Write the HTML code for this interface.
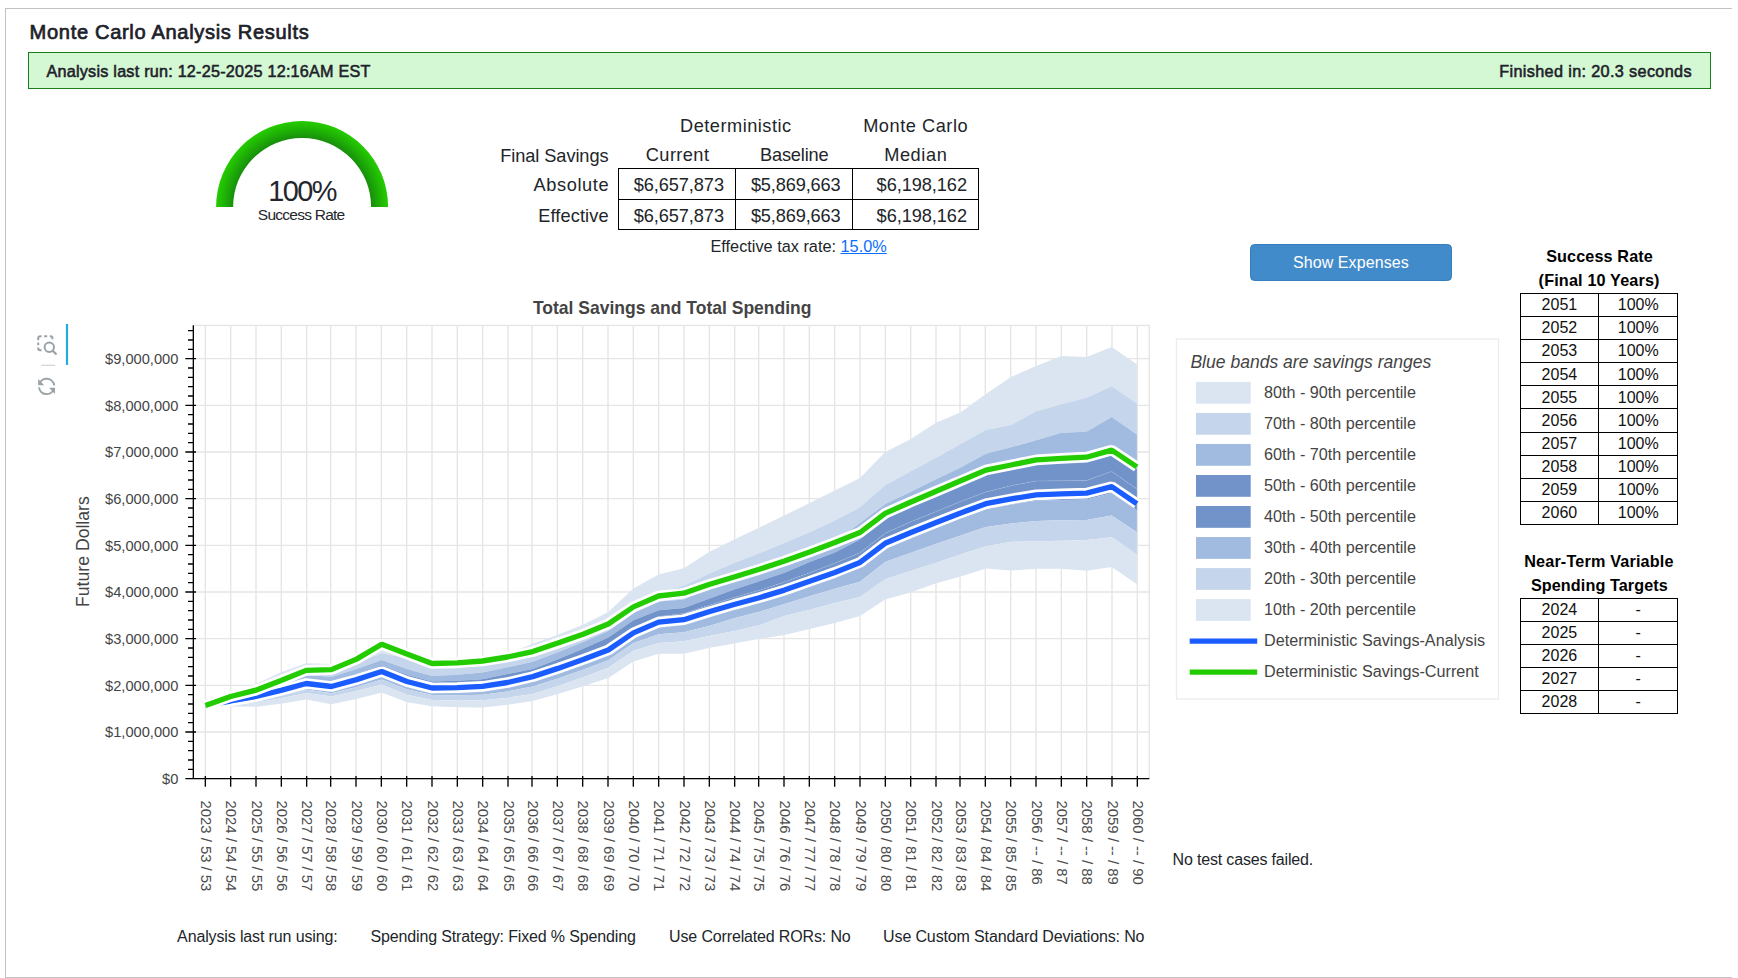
<!DOCTYPE html>
<html lang="en"><head><meta charset="utf-8"><title>Monte Carlo Analysis Results</title>
<style>
html,body{margin:0;padding:0;background:#fff;}
body{width:1738px;height:978px;position:relative;overflow:hidden;font-family:"Liberation Sans",Arial,Helvetica,sans-serif;color:#212529;}
.t{position:absolute;white-space:nowrap;margin:0;padding:0;font-weight:normal;}
.frame{position:absolute;left:5px;top:8px;width:1727px;height:970px;box-sizing:border-box;border:1px solid #c2c2c2;border-right:none;}
.banner{position:absolute;left:28px;top:52px;width:1683px;height:37px;box-sizing:border-box;border:1px solid #1b7d1b;background:#d4f7d4;}
svg.chart{position:absolute;left:0;top:0;}
svg.gauge{position:absolute;}
.box{position:absolute;box-sizing:border-box;border:1.33px solid #000;}
.ln{position:absolute;background:#000;}
.btn{position:absolute;left:1250px;top:244px;width:202px;height:37px;box-sizing:border-box;border:1px solid #357ebd;border-radius:4.5px;background:#428bca;}
a{color:#0d6efd;text-decoration:underline;}
</style></head><body>
<div class="frame"></div>
<h1 class="t" style="left:29.60px;top:19.68px;font-size:20.1px;line-height:24.12px;letter-spacing:0.659px;color:#1d2129;-webkit-text-stroke:0.7px #1d2129;">Monte Carlo Analysis Results</h1>
<div class="banner"></div>
<div class="t" style="left:46.50px;top:61.87px;font-size:16.2px;line-height:19.44px;letter-spacing:0.226px;color:#1d2129;-webkit-text-stroke:0.55px #1d2129;">Analysis last run: 12-25-2025 12:16AM EST</div>
<div class="t" style="left:1499.20px;top:61.87px;font-size:16.2px;line-height:19.44px;letter-spacing:0.366px;color:#1d2129;-webkit-text-stroke:0.55px #1d2129;">Finished in: 20.3 seconds</div>
<svg class="gauge" width="200" height="100" viewBox="202 115 200 100" style="left:202px;top:115px"><defs><radialGradient id="gg" gradientUnits="userSpaceOnUse" cx="302.1" cy="207.0" r="86.0"><stop offset="0" stop-color="#178f0c"/><stop offset="0.802" stop-color="#178f0c"/><stop offset="0.911" stop-color="#1fb305"/><stop offset="1" stop-color="#25cc00"/></radialGradient></defs><path d="M216.10 207.00A86.0 86.0 0 0 1 388.10 207.00L371.10 207.00A69.0 69.0 0 0 0 233.10 207.00Z" fill="url(#gg)"/></svg>
<div class="t" style="left:268.20px;top:173.75px;font-size:28.9px;line-height:34.68px;letter-spacing:-1.575px;color:#23272b;">100%</div>
<div class="t" style="left:257.80px;top:205.73px;font-size:15.5px;line-height:18.60px;letter-spacing:-0.747px;color:#23272b;">Success Rate</div>
<section class="summary">
<div class="t" style="left:680.00px;top:116.07px;font-size:18.2px;line-height:21.84px;letter-spacing:0.502px;color:#212529;">Deterministic</div>
<div class="t" style="left:863.20px;top:116.07px;font-size:18.2px;line-height:21.84px;letter-spacing:0.536px;color:#212529;">Monte Carlo</div>
<div class="t" style="left:500.30px;top:145.67px;font-size:18.2px;line-height:21.84px;letter-spacing:-0.080px;color:#212529;">Final Savings</div>
<div class="t" style="left:645.80px;top:145.17px;font-size:18.2px;line-height:21.84px;letter-spacing:0.417px;color:#212529;">Current</div>
<div class="t" style="left:760.00px;top:145.17px;font-size:18.2px;line-height:21.84px;letter-spacing:-0.174px;color:#212529;">Baseline</div>
<div class="t" style="left:884.20px;top:145.17px;font-size:18.2px;line-height:21.84px;letter-spacing:0.581px;color:#212529;">Median</div>
<div class="t" style="left:533.60px;top:174.97px;font-size:18.2px;line-height:21.84px;letter-spacing:0.595px;color:#212529;">Absolute</div>
<div class="t" style="left:538.20px;top:205.57px;font-size:18.2px;line-height:21.84px;letter-spacing:0.116px;color:#212529;">Effective</div>
<div class="ln" style="left:618px;top:168px;width:1px;height:62px"></div>
<div class="ln" style="left:735px;top:168px;width:1px;height:62px"></div>
<div class="ln" style="left:852px;top:168px;width:1px;height:62px"></div>
<div class="ln" style="left:978px;top:168px;width:1px;height:62px"></div>
<div class="ln" style="left:618px;top:168px;width:361px;height:1px"></div>
<div class="ln" style="left:618px;top:199px;width:361px;height:1px"></div>
<div class="ln" style="left:618px;top:229px;width:361px;height:1px"></div>
<div class="t" style="left:633.70px;top:174.97px;font-size:18.2px;line-height:21.84px;letter-spacing:-0.077px;color:#212529;">$6,657,873</div>
<div class="t" style="left:750.90px;top:174.97px;font-size:18.2px;line-height:21.84px;letter-spacing:-0.143px;color:#212529;">$5,869,663</div>
<div class="t" style="left:876.60px;top:174.97px;font-size:18.2px;line-height:21.84px;letter-spacing:-0.066px;color:#212529;">$6,198,162</div>
<div class="t" style="left:633.70px;top:205.57px;font-size:18.2px;line-height:21.84px;letter-spacing:-0.077px;color:#212529;">$6,657,873</div>
<div class="t" style="left:750.90px;top:205.57px;font-size:18.2px;line-height:21.84px;letter-spacing:-0.143px;color:#212529;">$5,869,663</div>
<div class="t" style="left:876.60px;top:205.57px;font-size:18.2px;line-height:21.84px;letter-spacing:-0.066px;color:#212529;">$6,198,162</div>
<div class="t" style="left:710.50px;top:237.17px;font-size:16.3px;line-height:19.56px;letter-spacing:0.001px;color:#212529;">Effective tax rate: <a>15.0%</a></div>
</section>
<div class="btn"></div>
<div class="t" style="left:1293.00px;top:252.86px;font-size:16px;line-height:19.20px;letter-spacing:0.080px;color:#fff;">Show Expenses</div>
<svg class="chart" width="1738" height="978" viewBox="0 0 1738 978" font-family="Liberation Sans, Arial, Helvetica, sans-serif">
<defs><clipPath id="pc"><rect x="193.3" y="325.3" width="956.0" height="453.3"/></clipPath></defs>
<rect x="193.3" y="325.3" width="956.0" height="453.3" fill="#fff"/>
<path d="M205.33 325.3V778.7M230.67 325.3V778.7M256.00 325.3V778.7M281.33 325.3V778.7M306.67 325.3V778.7M330.67 325.3V778.7M356.00 325.3V778.7M381.33 325.3V778.7M406.67 325.3V778.7M432.00 325.3V778.7M457.33 325.3V778.7M482.67 325.3V778.7M508.00 325.3V778.7M532.00 325.3V778.7M557.33 325.3V778.7M582.67 325.3V778.7M608.00 325.3V778.7M633.33 325.3V778.7M658.67 325.3V778.7M684.00 325.3V778.7M709.33 325.3V778.7M734.67 325.3V778.7M758.67 325.3V778.7M784.00 325.3V778.7M809.33 325.3V778.7M834.67 325.3V778.7M860.00 325.3V778.7M885.33 325.3V778.7M910.67 325.3V778.7M936.00 325.3V778.7M960.00 325.3V778.7M985.33 325.3V778.7M1010.67 325.3V778.7M1036.00 325.3V778.7M1061.33 325.3V778.7M1086.67 325.3V778.7M1112.00 325.3V778.7M1137.33 325.3V778.7M193.3 778.67H1149.3M193.3 732.00H1149.3M193.3 685.33H1149.3M193.3 638.67H1149.3M193.3 592.00H1149.3M193.3 545.33H1149.3M193.3 498.67H1149.3M193.3 452.00H1149.3M193.3 405.33H1149.3M193.3 358.67H1149.3" stroke="#e5e5e5" stroke-width="1.333" fill="none"/>
<path d="M193.3 325.3H1149.3V778.7" stroke="#e5e5e5" stroke-width="1.333" fill="none"/>
<g clip-path="url(#pc)">
<polygon points="205.50,705.40 230.67,694.27 255.85,683.90 281.02,672.30 306.19,663.20 331.36,664.10 356.54,656.10 381.71,644.52 406.88,654.70 432.06,664.13 457.23,661.95 482.40,658.34 507.58,654.00 532.75,643.70 557.92,634.80 583.09,624.70 608.27,612.00 633.44,588.60 658.61,574.40 683.79,568.30 708.96,552.00 734.13,539.60 759.31,527.60 784.48,515.30 809.65,503.10 834.82,490.40 860.00,478.10 885.17,452.00 910.34,439.30 935.52,423.00 960.69,412.20 985.86,394.00 1011.04,376.90 1036.21,366.10 1061.38,356.00 1086.55,357.00 1111.73,347.10 1136.90,364.20 1136.90,403.50 1111.73,386.20 1086.55,397.80 1061.38,404.20 1036.21,411.20 1011.04,425.10 985.86,430.00 960.69,443.90 935.52,458.00 910.34,471.50 885.17,485.20 860.00,507.30 834.82,520.50 809.65,532.30 784.48,543.10 759.31,553.20 734.13,563.00 708.96,573.70 683.79,585.80 658.61,592.00 633.44,606.05 608.27,623.93 583.09,634.66 557.92,644.86 532.75,654.26 507.58,661.00 482.40,665.00 457.23,666.80 432.06,667.50 406.88,658.00 381.71,653.30 356.54,662.79 331.36,671.16 306.19,669.63 281.02,678.79 255.85,687.57 230.67,696.23 205.50,705.40" fill="#dbe5f1"/>
<polygon points="205.50,705.40 230.67,696.23 255.85,687.57 281.02,678.79 306.19,669.63 331.36,671.16 356.54,662.79 381.71,653.30 406.88,658.00 432.06,667.50 457.23,666.80 482.40,665.00 507.58,661.00 532.75,654.26 557.92,644.86 583.09,634.66 608.27,623.93 633.44,606.05 658.61,592.00 683.79,585.80 708.96,573.70 734.13,563.00 759.31,553.20 784.48,543.10 809.65,532.30 834.82,520.50 860.00,507.30 885.17,485.20 910.34,471.50 935.52,458.00 960.69,443.90 985.86,430.00 1011.04,425.10 1036.21,411.20 1061.38,404.20 1086.55,397.80 1111.73,386.20 1136.90,403.50 1136.90,434.60 1111.73,417.10 1086.55,431.80 1061.38,432.70 1036.21,440.30 1011.04,447.30 985.86,453.70 960.69,467.50 935.52,479.40 910.34,492.00 885.17,504.00 860.00,523.10 834.82,541.50 809.65,551.00 784.48,560.00 759.31,568.30 734.13,576.00 708.96,583.50 683.79,599.40 658.61,601.60 633.44,613.30 608.27,631.00 583.09,641.94 557.92,652.28 532.75,661.80 507.58,667.30 482.40,672.50 457.23,674.79 432.06,675.90 406.88,669.04 381.71,660.10 356.54,669.07 331.36,676.89 306.19,674.81 281.02,683.13 255.85,690.91 230.67,698.01 205.50,705.40" fill="#c5d5eb"/>
<polygon points="205.50,705.40 230.67,698.01 255.85,690.91 281.02,683.13 306.19,674.81 331.36,676.89 356.54,669.07 381.71,660.10 406.88,669.04 432.06,675.90 457.23,674.79 482.40,672.50 507.58,667.30 532.75,661.80 557.92,652.28 583.09,641.94 608.27,631.00 633.44,613.30 658.61,601.60 683.79,599.40 708.96,583.50 734.13,576.00 759.31,568.30 784.48,560.00 809.65,551.00 834.82,541.50 860.00,523.10 885.17,504.00 910.34,492.00 935.52,479.40 960.69,467.50 985.86,453.70 1011.04,447.30 1036.21,440.30 1061.38,432.70 1086.55,431.80 1111.73,417.10 1136.90,434.60 1136.90,468.90 1111.73,452.10 1086.55,459.20 1061.38,460.40 1036.21,461.90 1011.04,467.00 985.86,472.10 960.69,482.80 935.52,493.50 910.34,504.20 885.17,515.40 860.00,539.60 834.82,552.40 809.65,562.10 784.48,572.70 759.31,581.20 734.13,589.50 708.96,598.80 683.79,607.90 658.61,610.20 633.44,620.20 608.27,637.40 583.09,648.66 557.92,659.25 532.75,669.00 507.58,674.00 482.40,679.20 457.23,680.84 432.06,681.40 406.88,674.66 381.71,665.20 356.54,673.78 331.36,681.19 306.19,678.70 281.02,686.38 255.85,693.41 230.67,699.35 205.50,705.40" fill="#a1bbe0"/>
<polygon points="205.50,705.40 230.67,699.35 255.85,693.41 281.02,686.38 306.19,678.70 331.36,681.19 356.54,673.78 381.71,665.20 406.88,674.66 432.06,681.40 457.23,680.84 482.40,679.20 507.58,674.00 532.75,669.00 557.92,659.25 583.09,648.66 608.27,637.40 633.44,620.20 658.61,610.20 683.79,607.90 708.96,598.80 734.13,589.50 759.31,581.20 784.48,572.70 809.65,562.10 834.82,552.40 860.00,539.60 885.17,515.40 910.34,504.20 935.52,493.50 960.69,482.80 985.86,472.10 1011.04,467.00 1036.21,461.90 1061.38,460.40 1086.55,459.20 1111.73,452.10 1136.90,468.90 1136.90,489.10 1111.73,471.40 1086.55,480.60 1061.38,480.79 1036.21,480.90 1011.04,485.68 985.86,492.00 960.69,501.42 935.52,511.86 910.34,522.02 885.17,533.17 860.00,552.70 834.82,563.25 809.65,572.69 784.48,582.01 759.31,590.28 734.13,597.48 708.96,605.25 683.79,613.54 658.61,616.38 633.44,627.75 608.27,644.96 583.09,654.66 557.92,663.78 532.75,672.18 507.58,678.47 482.40,682.57 457.23,684.16 432.06,684.70 406.88,677.76 381.71,667.71 356.54,676.10 331.36,683.30 306.19,680.61 281.02,687.98 255.85,694.64 230.67,700.01 205.50,705.40" fill="#7193c9"/>
<polygon points="205.50,705.40 230.67,700.01 255.85,694.64 281.02,687.98 306.19,680.61 331.36,683.30 356.54,676.10 381.71,667.71 406.88,677.76 432.06,684.70 457.23,684.16 482.40,682.57 507.58,678.47 532.75,672.18 557.92,663.78 583.09,654.66 608.27,644.96 633.44,627.75 658.61,616.38 683.79,613.54 708.96,605.25 734.13,597.48 759.31,590.28 784.48,582.01 809.65,572.69 834.82,563.25 860.00,552.70 885.17,533.17 910.34,522.02 935.52,511.86 960.69,501.42 985.86,492.00 1011.04,485.68 1036.21,480.90 1061.38,480.79 1086.55,480.60 1111.73,471.40 1136.90,489.10 1136.90,510.15 1111.73,493.03 1086.55,499.41 1061.38,499.88 1036.21,500.71 1011.04,504.64 985.86,508.88 960.69,517.99 935.52,527.65 910.34,537.58 885.17,547.79 860.00,566.70 834.82,576.46 809.65,585.12 784.48,593.68 759.31,600.99 734.13,607.61 708.96,614.70 683.79,622.43 658.61,624.64 633.44,635.18 608.27,652.23 583.09,661.64 557.92,670.45 532.75,678.56 507.58,684.28 482.40,688.10 457.23,689.27 432.06,689.46 406.88,683.16 381.71,673.18 356.54,681.15 331.36,687.92 306.19,684.78 281.02,691.47 255.85,697.32 230.67,701.44 205.50,705.40" fill="#7193c9"/>
<polygon points="205.50,705.40 230.67,701.44 255.85,697.32 281.02,691.47 306.19,684.78 331.36,687.92 356.54,681.15 381.71,673.18 406.88,683.16 432.06,689.46 457.23,689.27 482.40,688.10 507.58,684.28 532.75,678.56 557.92,670.45 583.09,661.64 608.27,652.23 633.44,635.18 658.61,624.64 683.79,622.43 708.96,614.70 734.13,607.61 759.31,600.99 784.48,593.68 809.65,585.12 834.82,576.46 860.00,566.70 885.17,547.79 910.34,537.58 935.52,527.65 960.69,517.99 985.86,508.88 1011.04,504.64 1036.21,500.71 1061.38,499.88 1086.55,499.41 1111.73,493.03 1136.90,510.15 1136.90,532.30 1111.73,515.40 1086.55,520.10 1061.38,520.20 1036.21,521.00 1011.04,523.40 985.86,527.00 960.69,535.50 935.52,543.90 910.34,553.00 885.17,562.00 860.00,581.80 834.82,588.70 809.65,596.20 784.48,604.10 759.31,611.70 734.13,618.30 708.96,625.90 683.79,632.30 658.61,634.20 633.44,643.10 608.27,660.20 583.09,669.68 557.92,678.49 532.75,686.60 507.58,691.43 482.40,694.72 457.23,695.24 432.06,694.90 406.88,689.30 381.71,679.42 356.54,686.91 331.36,693.17 306.19,689.53 281.02,695.45 255.85,700.38 230.67,703.07 205.50,705.40" fill="#a1bbe0"/>
<polygon points="205.50,705.40 230.67,703.07 255.85,700.38 281.02,695.45 306.19,689.53 331.36,693.17 356.54,686.91 381.71,679.42 406.88,689.30 432.06,694.90 457.23,695.24 482.40,694.72 507.58,691.43 532.75,686.60 557.92,678.49 583.09,669.68 608.27,660.20 633.44,643.10 658.61,634.20 683.79,632.30 708.96,625.90 734.13,618.30 759.31,611.70 784.48,604.10 809.65,596.20 834.82,588.70 860.00,581.80 885.17,562.00 910.34,553.00 935.52,543.90 960.69,535.50 985.86,527.00 1011.04,523.40 1036.21,521.00 1061.38,520.20 1086.55,520.10 1111.73,515.40 1136.90,532.30 1136.90,554.50 1111.73,537.20 1086.55,539.90 1061.38,540.80 1036.21,541.20 1011.04,541.80 985.86,546.30 960.69,554.50 935.52,563.00 910.34,571.00 885.17,579.20 860.00,597.00 834.82,603.10 809.65,609.70 784.48,615.90 759.31,625.30 734.13,631.00 708.96,636.10 683.79,641.20 658.61,643.10 633.44,650.70 608.27,667.80 583.09,677.21 557.92,685.90 532.75,693.90 507.58,697.68 482.40,700.30 457.23,700.61 432.06,700.10 406.88,694.75 381.71,684.50 356.54,691.08 331.36,696.50 306.19,693.00 281.02,698.36 255.85,702.62 230.67,704.27 205.50,705.40" fill="#c5d5eb"/>
<polygon points="205.50,705.40 230.67,704.27 255.85,702.62 281.02,698.36 306.19,693.00 331.36,696.50 356.54,691.08 381.71,684.50 406.88,694.75 432.06,700.10 457.23,700.61 482.40,700.30 507.58,697.68 532.75,693.90 557.92,685.90 583.09,677.21 608.27,667.80 633.44,650.70 658.61,643.10 683.79,641.20 708.96,636.10 734.13,631.00 759.31,625.30 784.48,615.90 809.65,609.70 834.82,603.10 860.00,597.00 885.17,579.20 910.34,571.00 935.52,563.00 960.69,554.50 985.86,546.30 1011.04,541.80 1036.21,541.20 1061.38,540.80 1086.55,539.90 1111.73,537.20 1136.90,554.50 1136.90,584.30 1111.73,567.00 1086.55,570.80 1061.38,568.70 1036.21,568.70 1011.04,570.60 985.86,568.50 960.69,576.50 935.52,583.40 910.34,592.50 885.17,599.40 860.00,616.10 834.82,623.10 809.65,629.00 784.48,634.90 759.31,638.80 734.13,643.40 708.96,648.10 683.79,653.80 658.61,653.80 633.44,661.40 608.27,677.90 583.09,686.30 557.92,694.00 532.75,701.10 507.58,704.80 482.40,707.60 457.23,707.30 432.06,706.30 406.88,702.20 381.71,692.50 356.54,699.00 331.36,704.20 306.19,699.50 281.02,703.80 255.85,706.80 230.67,706.50 205.50,705.40" fill="#dbe5f1"/>
<polyline points="205.50,705.40 230.67,700.01 255.85,694.64 281.02,687.98 306.19,680.61 331.36,683.30 356.54,676.10 381.71,667.71 406.88,677.76 432.06,684.70 457.23,684.16 482.40,682.57 507.58,678.47 532.75,672.18 557.92,663.78 583.09,654.66 608.27,644.96 633.44,627.75 658.61,616.38 683.79,613.54 708.96,605.25 734.13,597.48 759.31,590.28 784.48,582.01 809.65,572.69 834.82,563.25 860.00,552.70 885.17,533.17 910.34,522.02 935.52,511.86 960.69,501.42 985.86,492.00 1011.04,485.68 1036.21,480.90 1061.38,480.79 1086.55,480.60 1111.73,471.40 1136.90,489.10" fill="none" stroke="#fff" stroke-opacity="0.16" stroke-width="1.1" stroke-dasharray="1.8 1.2"/>
<polyline points="205.50,705.40 230.67,701.00 255.85,696.50 281.02,690.40 306.19,683.50 331.36,686.50 356.54,679.60 381.71,671.50 406.88,681.50 432.06,688.00 457.23,687.70 482.40,686.40 507.58,682.50 532.75,676.60 557.92,668.40 583.09,659.50 608.27,650.00 633.44,632.90 658.61,622.10 683.79,619.70 708.96,611.80 734.13,604.50 759.31,597.70 784.48,590.10 809.65,581.30 834.82,572.40 860.00,562.40 885.17,543.30 910.34,532.80 935.52,522.80 960.69,512.90 985.86,503.70 1011.04,498.90 1036.21,494.80 1061.38,493.90 1086.55,493.20 1111.73,486.60 1136.90,503.70" fill="none" stroke="#fff" stroke-width="10.67" stroke-linejoin="bevel"/>
<polyline points="205.50,705.40 230.67,701.00 255.85,696.50 281.02,690.40 306.19,683.50 331.36,686.50 356.54,679.60 381.71,671.50 406.88,681.50 432.06,688.00 457.23,687.70 482.40,686.40 507.58,682.50 532.75,676.60 557.92,668.40 583.09,659.50 608.27,650.00 633.44,632.90 658.61,622.10 683.79,619.70 708.96,611.80 734.13,604.50 759.31,597.70 784.48,590.10 809.65,581.30 834.82,572.40 860.00,562.40 885.17,543.30 910.34,532.80 935.52,522.80 960.69,512.90 985.86,503.70 1011.04,498.90 1036.21,494.80 1061.38,493.90 1086.55,493.20 1111.73,486.60 1136.90,503.70" fill="none" stroke="#1a5cff" stroke-width="5.33" stroke-linejoin="bevel"/>
<polyline points="205.50,705.40 230.67,696.50 255.85,690.20 281.02,680.50 306.19,670.40 331.36,669.60 356.54,659.10 381.71,644.20 406.88,654.00 432.06,663.50 457.23,662.80 482.40,661.00 507.58,657.00 532.75,651.60 557.92,643.10 583.09,634.20 608.27,624.00 633.44,606.90 658.61,596.00 683.79,593.20 708.96,584.50 734.13,577.00 759.31,569.30 784.48,561.00 809.65,552.00 834.82,542.50 860.00,532.50 885.17,513.40 910.34,502.20 935.52,491.50 960.69,480.80 985.86,470.10 1011.04,465.00 1036.21,459.90 1061.38,458.40 1086.55,457.20 1111.73,450.10 1136.90,466.90" fill="none" stroke="#fff" stroke-width="10.67" stroke-linejoin="bevel"/>
<polyline points="205.50,705.40 230.67,696.50 255.85,690.20 281.02,680.50 306.19,670.40 331.36,669.60 356.54,659.10 381.71,644.20 406.88,654.00 432.06,663.50 457.23,662.80 482.40,661.00 507.58,657.00 532.75,651.60 557.92,643.10 583.09,634.20 608.27,624.00 633.44,606.90 658.61,596.00 683.79,593.20 708.96,584.50 734.13,577.00 759.31,569.30 784.48,561.00 809.65,552.00 834.82,542.50 860.00,532.50 885.17,513.40 910.34,502.20 935.52,491.50 960.69,480.80 985.86,470.10 1011.04,465.00 1036.21,459.90 1061.38,458.40 1086.55,457.20 1111.73,450.10 1136.90,466.90" fill="none" stroke="#22cc00" stroke-width="5.33" stroke-linejoin="bevel"/>
</g>
<path d="M193.33 325.3V779.34M192.66 778.67H1149.3M205.33 776.00V786.67M230.67 776.00V786.67M256.00 776.00V786.67M281.33 776.00V786.67M306.67 776.00V786.67M330.67 776.00V786.67M356.00 776.00V786.67M381.33 776.00V786.67M406.67 776.00V786.67M432.00 776.00V786.67M457.33 776.00V786.67M482.67 776.00V786.67M508.00 776.00V786.67M532.00 776.00V786.67M557.33 776.00V786.67M582.67 776.00V786.67M608.00 776.00V786.67M633.33 776.00V786.67M658.67 776.00V786.67M684.00 776.00V786.67M709.33 776.00V786.67M734.67 776.00V786.67M758.67 776.00V786.67M784.00 776.00V786.67M809.33 776.00V786.67M834.67 776.00V786.67M860.00 776.00V786.67M885.33 776.00V786.67M910.67 776.00V786.67M936.00 776.00V786.67M960.00 776.00V786.67M985.33 776.00V786.67M1010.67 776.00V786.67M1036.00 776.00V786.67M1061.33 776.00V786.67M1086.67 776.00V786.67M1112.00 776.00V786.67M1137.33 776.00V786.67M185.33 778.67H196.00M188.00 769.33H193.33M188.00 760.00H193.33M188.00 750.67H193.33M188.00 741.33H193.33M185.33 732.00H196.00M188.00 722.67H193.33M188.00 713.33H193.33M188.00 704.00H193.33M188.00 694.67H193.33M185.33 685.33H196.00M188.00 676.00H193.33M188.00 666.67H193.33M188.00 657.33H193.33M188.00 648.00H193.33M185.33 638.67H196.00M188.00 629.33H193.33M188.00 620.00H193.33M188.00 610.67H193.33M188.00 601.33H193.33M185.33 592.00H196.00M188.00 582.67H193.33M188.00 573.33H193.33M188.00 564.00H193.33M188.00 554.67H193.33M185.33 545.33H196.00M188.00 536.00H193.33M188.00 526.67H193.33M188.00 517.33H193.33M188.00 508.00H193.33M185.33 498.67H196.00M188.00 489.33H193.33M188.00 480.00H193.33M188.00 470.67H193.33M188.00 461.33H193.33M185.33 452.00H196.00M188.00 442.67H193.33M188.00 433.33H193.33M188.00 424.00H193.33M188.00 414.67H193.33M185.33 405.33H196.00M188.00 396.00H193.33M188.00 386.67H193.33M188.00 377.33H193.33M188.00 368.00H193.33M185.33 358.67H196.00M188.00 349.33H193.33M188.00 340.00H193.33M188.00 330.67H193.33" stroke="#000" stroke-width="1.333" fill="none"/>
<g font-size="14.67" fill="#444" text-anchor="end">
<text x="178.4" y="783.92">$0</text>
<text x="178.4" y="737.25">$1,000,000</text>
<text x="178.4" y="690.58">$2,000,000</text>
<text x="178.4" y="643.92">$3,000,000</text>
<text x="178.4" y="597.25">$4,000,000</text>
<text x="178.4" y="550.58">$5,000,000</text>
<text x="178.4" y="503.92">$6,000,000</text>
<text x="178.4" y="457.25">$7,000,000</text>
<text x="178.4" y="410.58">$8,000,000</text>
<text x="178.4" y="363.92">$9,000,000</text>
</g>
<g font-size="14.85" fill="#4c4c4c">
<text transform="translate(200.93 800.5) rotate(90)">2023 / 53 / 53</text>
<text transform="translate(226.27 800.5) rotate(90)">2024 / 54 / 54</text>
<text transform="translate(251.60 800.5) rotate(90)">2025 / 55 / 55</text>
<text transform="translate(276.93 800.5) rotate(90)">2026 / 56 / 56</text>
<text transform="translate(302.27 800.5) rotate(90)">2027 / 57 / 57</text>
<text transform="translate(326.27 800.5) rotate(90)">2028 / 58 / 58</text>
<text transform="translate(351.60 800.5) rotate(90)">2029 / 59 / 59</text>
<text transform="translate(376.93 800.5) rotate(90)">2030 / 60 / 60</text>
<text transform="translate(402.27 800.5) rotate(90)">2031 / 61 / 61</text>
<text transform="translate(427.60 800.5) rotate(90)">2032 / 62 / 62</text>
<text transform="translate(452.93 800.5) rotate(90)">2033 / 63 / 63</text>
<text transform="translate(478.27 800.5) rotate(90)">2034 / 64 / 64</text>
<text transform="translate(503.60 800.5) rotate(90)">2035 / 65 / 65</text>
<text transform="translate(527.60 800.5) rotate(90)">2036 / 66 / 66</text>
<text transform="translate(552.93 800.5) rotate(90)">2037 / 67 / 67</text>
<text transform="translate(578.27 800.5) rotate(90)">2038 / 68 / 68</text>
<text transform="translate(603.60 800.5) rotate(90)">2039 / 69 / 69</text>
<text transform="translate(628.93 800.5) rotate(90)">2040 / 70 / 70</text>
<text transform="translate(654.27 800.5) rotate(90)">2041 / 71 / 71</text>
<text transform="translate(679.60 800.5) rotate(90)">2042 / 72 / 72</text>
<text transform="translate(704.93 800.5) rotate(90)">2043 / 73 / 73</text>
<text transform="translate(730.27 800.5) rotate(90)">2044 / 74 / 74</text>
<text transform="translate(754.27 800.5) rotate(90)">2045 / 75 / 75</text>
<text transform="translate(779.60 800.5) rotate(90)">2046 / 76 / 76</text>
<text transform="translate(804.93 800.5) rotate(90)">2047 / 77 / 77</text>
<text transform="translate(830.27 800.5) rotate(90)">2048 / 78 / 78</text>
<text transform="translate(855.60 800.5) rotate(90)">2049 / 79 / 79</text>
<text transform="translate(880.93 800.5) rotate(90)">2050 / 80 / 80</text>
<text transform="translate(906.27 800.5) rotate(90)">2051 / 81 / 81</text>
<text transform="translate(931.60 800.5) rotate(90)">2052 / 82 / 82</text>
<text transform="translate(955.60 800.5) rotate(90)">2053 / 83 / 83</text>
<text transform="translate(980.93 800.5) rotate(90)">2054 / 84 / 84</text>
<text transform="translate(1006.27 800.5) rotate(90)">2055 / 85 / 85</text>
<text transform="translate(1031.60 800.5) rotate(90)">2056 / -- / 86</text>
<text transform="translate(1056.93 800.5) rotate(90)">2057 / -- / 87</text>
<text transform="translate(1082.27 800.5) rotate(90)">2058 / -- / 88</text>
<text transform="translate(1107.60 800.5) rotate(90)">2059 / -- / 89</text>
<text transform="translate(1132.93 800.5) rotate(90)">2060 / -- / 90</text>
</g>
<text transform="translate(89.2 551.6) rotate(-90)" text-anchor="middle" font-size="17.65" fill="#444">Future Dollars</text>
<text x="672.2" y="313.8" text-anchor="middle" font-size="17.53" font-weight="bold" fill="#444">Total Savings and Total Spending</text>
<rect x="1176.5" y="339" width="322" height="360" fill="#fff" stroke="#ececec" stroke-width="1.333"/>
<text x="1190.4" y="368.2" font-size="17.56" font-style="italic" fill="#444">Blue bands are savings ranges</text>
<g font-size="16.18" fill="#444">
<rect x="1196" y="381.90" width="54.7" height="21.8" fill="#dbe5f1"/>
<text x="1264" y="397.80">80th - 90th percentile</text>
<rect x="1196" y="412.93" width="54.7" height="21.8" fill="#c5d5eb"/>
<text x="1264" y="428.83">70th - 80th percentile</text>
<rect x="1196" y="443.96" width="54.7" height="21.8" fill="#a1bbe0"/>
<text x="1264" y="459.86">60th - 70th percentile</text>
<rect x="1196" y="474.99" width="54.7" height="21.8" fill="#7193c9"/>
<text x="1264" y="490.89">50th - 60th percentile</text>
<rect x="1196" y="506.02" width="54.7" height="21.8" fill="#7193c9"/>
<text x="1264" y="521.92">40th - 50th percentile</text>
<rect x="1196" y="537.05" width="54.7" height="21.8" fill="#a1bbe0"/>
<text x="1264" y="552.95">30th - 40th percentile</text>
<rect x="1196" y="568.08" width="54.7" height="21.8" fill="#c5d5eb"/>
<text x="1264" y="583.98">20th - 30th percentile</text>
<rect x="1196" y="599.11" width="54.7" height="21.8" fill="#dbe5f1"/>
<text x="1264" y="615.01">10th - 20th percentile</text>
<path d="M1189.7 641.04H1257.2" stroke="#1a5cff" stroke-width="5.33"/>
<text x="1264" y="646.04">Deterministic Savings-Analysis</text>
<path d="M1189.7 672.07H1257.2" stroke="#22cc00" stroke-width="5.33"/>
<text x="1264" y="677.07">Deterministic Savings-Current</text>
</g>
<rect x="65.9" y="324" width="2.2" height="40.9" fill="#26aae1"/>
<path d="M41.3 365.3H55.2" stroke="#d6d6d6" stroke-width="1.33"/>
<g fill="none" stroke="#9aa2a8" stroke-width="2">
<path d="M38.2 340.2V338.4Q38.2 336.2 40.4 336.2H41.6 M44.2 336.2H47.2 M49.8 336.2H50.6Q52.4 336.2 52.4 338V339.2 M38.2 342.4V345.2 M38.2 347.4V348.2Q38.2 350.2 40.2 350.2H41.6"/>
<circle cx="49.3" cy="347.3" r="4.7"/>
<path d="M52.7 350.8L56.5 354.5" stroke-width="2.2"/>
</g>
<g fill="none" stroke="#9aa2a8" stroke-width="2">
<path d="M54.23 385.33A7.7 7.7 0 0 0 39.36 383.77 M38.97 387.47A7.7 7.7 0 0 0 53.84 389.03"/>
<path d="M38.2 379V385.2H44.2Z M55 394V387.8H49Z" fill="#9aa2a8" stroke="none"/>
</g>
</svg>
<div class="t" style="left:1546.20px;top:246.57px;font-size:16.2px;line-height:19.44px;letter-spacing:0.121px;font-weight:bold;color:#000;">Success Rate</div>
<div class="t" style="left:1538.60px;top:270.57px;font-size:16.2px;line-height:19.44px;letter-spacing:0.162px;font-weight:bold;color:#000;">(Final 10 Years)</div>
<div class="ln" style="left:1520px;top:293px;width:1px;height:232px"></div>
<div class="ln" style="left:1598px;top:293px;width:1px;height:232px"></div>
<div class="ln" style="left:1677px;top:293px;width:1px;height:232px"></div>
<div class="ln" style="left:1520px;top:293px;width:158px;height:1px"></div>
<div class="ln" style="left:1520px;top:316px;width:158px;height:1px"></div>
<div class="ln" style="left:1520px;top:339px;width:158px;height:1px"></div>
<div class="ln" style="left:1520px;top:362px;width:158px;height:1px"></div>
<div class="ln" style="left:1520px;top:385px;width:158px;height:1px"></div>
<div class="ln" style="left:1520px;top:408px;width:158px;height:1px"></div>
<div class="ln" style="left:1520px;top:432px;width:158px;height:1px"></div>
<div class="ln" style="left:1520px;top:455px;width:158px;height:1px"></div>
<div class="ln" style="left:1520px;top:478px;width:158px;height:1px"></div>
<div class="ln" style="left:1520px;top:501px;width:158px;height:1px"></div>
<div class="ln" style="left:1520px;top:524px;width:158px;height:1px"></div>
<div class="t" style="left:1541.60px;top:295.26px;font-size:16px;line-height:19.20px;color:#111;">2051</div>
<div class="t" style="left:1617.74px;top:295.26px;font-size:16px;line-height:19.20px;color:#111;">100%</div>
<div class="t" style="left:1541.60px;top:318.35px;font-size:16px;line-height:19.20px;color:#111;">2052</div>
<div class="t" style="left:1617.74px;top:318.35px;font-size:16px;line-height:19.20px;color:#111;">100%</div>
<div class="t" style="left:1541.60px;top:341.44px;font-size:16px;line-height:19.20px;color:#111;">2053</div>
<div class="t" style="left:1617.74px;top:341.44px;font-size:16px;line-height:19.20px;color:#111;">100%</div>
<div class="t" style="left:1541.60px;top:364.53px;font-size:16px;line-height:19.20px;color:#111;">2054</div>
<div class="t" style="left:1617.74px;top:364.53px;font-size:16px;line-height:19.20px;color:#111;">100%</div>
<div class="t" style="left:1541.60px;top:387.62px;font-size:16px;line-height:19.20px;color:#111;">2055</div>
<div class="t" style="left:1617.74px;top:387.62px;font-size:16px;line-height:19.20px;color:#111;">100%</div>
<div class="t" style="left:1541.60px;top:410.71px;font-size:16px;line-height:19.20px;color:#111;">2056</div>
<div class="t" style="left:1617.74px;top:410.71px;font-size:16px;line-height:19.20px;color:#111;">100%</div>
<div class="t" style="left:1541.60px;top:433.80px;font-size:16px;line-height:19.20px;color:#111;">2057</div>
<div class="t" style="left:1617.74px;top:433.80px;font-size:16px;line-height:19.20px;color:#111;">100%</div>
<div class="t" style="left:1541.60px;top:456.89px;font-size:16px;line-height:19.20px;color:#111;">2058</div>
<div class="t" style="left:1617.74px;top:456.89px;font-size:16px;line-height:19.20px;color:#111;">100%</div>
<div class="t" style="left:1541.60px;top:479.98px;font-size:16px;line-height:19.20px;color:#111;">2059</div>
<div class="t" style="left:1617.74px;top:479.98px;font-size:16px;line-height:19.20px;color:#111;">100%</div>
<div class="t" style="left:1541.60px;top:503.07px;font-size:16px;line-height:19.20px;color:#111;">2060</div>
<div class="t" style="left:1617.74px;top:503.07px;font-size:16px;line-height:19.20px;color:#111;">100%</div>
<div class="t" style="left:1524.20px;top:551.67px;font-size:16.2px;line-height:19.44px;letter-spacing:0.172px;font-weight:bold;color:#000;">Near-Term Variable</div>
<div class="t" style="left:1530.90px;top:575.77px;font-size:16.2px;line-height:19.44px;letter-spacing:0.093px;font-weight:bold;color:#000;">Spending Targets</div>
<div class="ln" style="left:1520px;top:598px;width:1px;height:116px"></div>
<div class="ln" style="left:1598px;top:598px;width:1px;height:116px"></div>
<div class="ln" style="left:1677px;top:598px;width:1px;height:116px"></div>
<div class="ln" style="left:1520px;top:598px;width:158px;height:1px"></div>
<div class="ln" style="left:1520px;top:621px;width:158px;height:1px"></div>
<div class="ln" style="left:1520px;top:644px;width:158px;height:1px"></div>
<div class="ln" style="left:1520px;top:667px;width:158px;height:1px"></div>
<div class="ln" style="left:1520px;top:690px;width:158px;height:1px"></div>
<div class="ln" style="left:1520px;top:713px;width:158px;height:1px"></div>
<div class="t" style="left:1541.60px;top:600.26px;font-size:16px;line-height:19.20px;color:#111;">2024</div>
<div class="t" style="left:1635.54px;top:600.26px;font-size:16px;line-height:19.20px;color:#111;">-</div>
<div class="t" style="left:1541.60px;top:623.24px;font-size:16px;line-height:19.20px;color:#111;">2025</div>
<div class="t" style="left:1635.54px;top:623.24px;font-size:16px;line-height:19.20px;color:#111;">-</div>
<div class="t" style="left:1541.60px;top:646.22px;font-size:16px;line-height:19.20px;color:#111;">2026</div>
<div class="t" style="left:1635.54px;top:646.22px;font-size:16px;line-height:19.20px;color:#111;">-</div>
<div class="t" style="left:1541.60px;top:669.20px;font-size:16px;line-height:19.20px;color:#111;">2027</div>
<div class="t" style="left:1635.54px;top:669.20px;font-size:16px;line-height:19.20px;color:#111;">-</div>
<div class="t" style="left:1541.60px;top:692.18px;font-size:16px;line-height:19.20px;color:#111;">2028</div>
<div class="t" style="left:1635.54px;top:692.18px;font-size:16px;line-height:19.20px;color:#111;">-</div>
<div class="t" style="left:1172.60px;top:849.76px;font-size:16px;line-height:19.20px;letter-spacing:-0.173px;color:#212529;">No test cases failed.</div>
<div class="t" style="left:177.10px;top:926.76px;font-size:16px;line-height:19.20px;letter-spacing:-0.132px;color:#212529;">Analysis last run using:</div>
<div class="t" style="left:370.50px;top:926.76px;font-size:16px;line-height:19.20px;letter-spacing:-0.150px;color:#212529;">Spending Strategy: Fixed % Spending</div>
<div class="t" style="left:669.10px;top:926.76px;font-size:16px;line-height:19.20px;letter-spacing:-0.152px;color:#212529;">Use Correlated RORs: No</div>
<div class="t" style="left:883.10px;top:926.76px;font-size:16px;line-height:19.20px;letter-spacing:-0.136px;color:#212529;">Use Custom Standard Deviations: No</div>
</body></html>
